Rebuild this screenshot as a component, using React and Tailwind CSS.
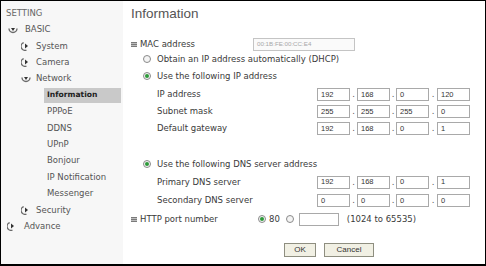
import React from "react";

const F = { fontFamily: '"DejaVu Sans", Verdana, sans-serif' };
const A = { fontFamily: '"Liberation Sans", Arial, sans-serif' };

function Tog({ open }) {
  return (
    <svg width="10" height="10" viewBox="0 0 10 10" className="shrink-0">
      {open ? (
        <>
          <path d="M1 3.5 A4 4 0 0 0 9 3.5" fill="none" stroke="#6a6a6a" strokeWidth="1.4" />
          <path d="M3 3 L7 3 L5 6 Z" fill="#333" />
        </>
      ) : (
        <>
          <path d="M4 1 A4 4 0 0 0 4 9" fill="none" stroke="#6a6a6a" strokeWidth="1.4" transform="rotate(-20 5 5)" />
          <path d="M4 2.5 L7 5 L4 7.5 Z" fill="#333" />
        </>
      )}
    </svg>
  );
}

function Radio({ on }) {
  return (
    <span className="w-[8px] h-[8px] rounded-full border border-[#8a8a8a] bg-[#f4f4f4] flex items-center justify-center shrink-0">
      {on && <span className="w-[4px] h-[4px] rounded-full bg-[#2e9a3a]" />}
    </span>
  );
}

function Bullet() {
  return (
    <span className="w-[6px] h-[5px] bg-[#7a7a7a] shrink-0 flex flex-col justify-between py-[1px]">
      <span className="h-px bg-[#bdbdbd]" />
      <span className="h-px bg-[#bdbdbd]" />
    </span>
  );
}

function Box({ v }) {
  return (
    <div className="w-[33px] h-[13px] border border-[#a9a9a9] bg-white flex items-center pl-[3px] text-[7.5px] text-[#333]" style={A}>
      {v}
    </div>
  );
}

function IpRow({ label, vals, h }) {
  return (
    <div className={`flex items-center ${h}`}>
      <div className="w-[186px] pl-[26px]">{label}</div>
      <div className="flex items-center">
        <Box v={vals[0]} />
        <span className="w-[7px] text-center text-[#555]">.</span>
        <Box v={vals[1]} />
        <span className="w-[6px] text-center text-[#555]">.</span>
        <Box v={vals[2]} />
        <span className="w-[8px] text-center text-[#555]">.</span>
        <Box v={vals[3]} />
      </div>
    </div>
  );
}

const SideItem = ({ children, className = "" }) => (
  <div className={`h-[16.4px] flex items-center ${className}`}>{children}</div>
);

export default function App() {
  return (
    <div className="w-[486px] h-[266px] border border-black border-b-2 flex bg-white overflow-hidden" style={F}>
      <div className="w-[122px] bg-[#f7f7f7] pt-[4px] text-[8.5px] text-[#555]">
        <SideItem className="pl-[5px] text-[#666]">SETTING</SideItem>
        <SideItem className="pl-[7px] gap-[7px]"><Tog open /><span>BASIC</span></SideItem>
        <SideItem className="pl-[20px] gap-[5px]"><Tog /><span>System</span></SideItem>
        <SideItem className="pl-[20px] gap-[5px]"><Tog /><span>Camera</span></SideItem>
        <SideItem className="pl-[20px] gap-[5px]"><Tog open /><span>Network</span></SideItem>
        <SideItem className="pl-[43px] pr-[2px]">
          <div className="h-[15px] w-full bg-[#c9c9c9] flex items-center pl-[3px] font-bold text-[#222] text-[7.6px]">Information</div>
        </SideItem>
        <SideItem className="pl-[46px]">PPPoE</SideItem>
        <SideItem className="pl-[46px]">DDNS</SideItem>
        <SideItem className="pl-[46px]">UPnP</SideItem>
        <SideItem className="pl-[46px]">Bonjour</SideItem>
        <SideItem className="pl-[46px]">IP Notification</SideItem>
        <SideItem className="pl-[46px]">Messenger</SideItem>
        <SideItem className="pl-[20px] gap-[5px]"><Tog /><span>Security</span></SideItem>
        <SideItem className="pl-[6px] gap-[7px]"><Tog /><span>Advance</span></SideItem>
      </div>
      <div className="flex-1 flex flex-col pl-[8px] text-[8.5px] text-[#3a3a3a]">
        <div className="h-[26px] flex items-center text-[13.5px] text-[#555]" style={A}>
          Information
        </div>
        <div className="h-[9px]" />
        <div className="h-[16px] flex items-center">
          <div className="w-[122px] flex items-center gap-[3px]"><Bullet /><span>MAC address</span></div>
          <div className="w-[102px] h-[13px] border border-[#c4c4c4] bg-[#fafafa] flex items-center pl-[3px] text-[6.2px] text-[#a8a8a8]" style={A}>
            00:1B:FE:00:CC:E4
          </div>
        </div>
        <div className="h-[14px] flex items-center pl-[12px] gap-[6px]"><Radio /><span>Obtain an IP address automatically (DHCP)</span></div>
        <div className="h-[20px] flex items-center pl-[12px] gap-[6px]"><Radio on /><span>Use the following IP address</span></div>
        <IpRow label="IP address" vals={["192", "168", "0", "120"]} h="h-[17px]" />
        <IpRow label="Subnet mask" vals={["255", "255", "255", "0"]} h="h-[17px]" />
        <IpRow label="Default gateway" vals={["192", "168", "0", "1"]} h="h-[17px]" />
        <div className="h-[19px]" />
        <div className="h-[16px] flex items-center pl-[12px] gap-[6px]"><Radio on /><span>Use the following DNS server address</span></div>
        <IpRow label="Primary DNS server" vals={["192", "168", "0", "1"]} h="h-[20px]" />
        <IpRow label="Secondary DNS server" vals={["0", "0", "0", "0"]} h="h-[17px]" />
        <div className="h-[20px] flex items-center">
          <div className="w-[127px] flex items-center gap-[3px]"><Bullet /><span>HTTP port number</span></div>
          <Radio on />
          <span className="ml-[3px] mr-[6px]">80</span>
          <Radio />
          <div className="ml-[5px] w-[40px] h-[13px] border border-[#a9a9a9] bg-white" />
          <span className="ml-[8px]">(1024 to 65535)</span>
        </div>
        <div className="h-[14px]" />
        <div className="flex items-center pl-[153px] gap-[8px]" style={A}>
          <button className="w-[32px] h-[14px] border border-[#8e8e80] bg-[#f1f0e4] text-[8px] text-[#333] flex items-center justify-center">OK</button>
          <button className="w-[50px] h-[14px] border border-[#8e8e80] bg-[#f1f0e4] text-[8px] text-[#333] flex items-center justify-center">Cancel</button>
        </div>
      </div>
    </div>
  );
}
